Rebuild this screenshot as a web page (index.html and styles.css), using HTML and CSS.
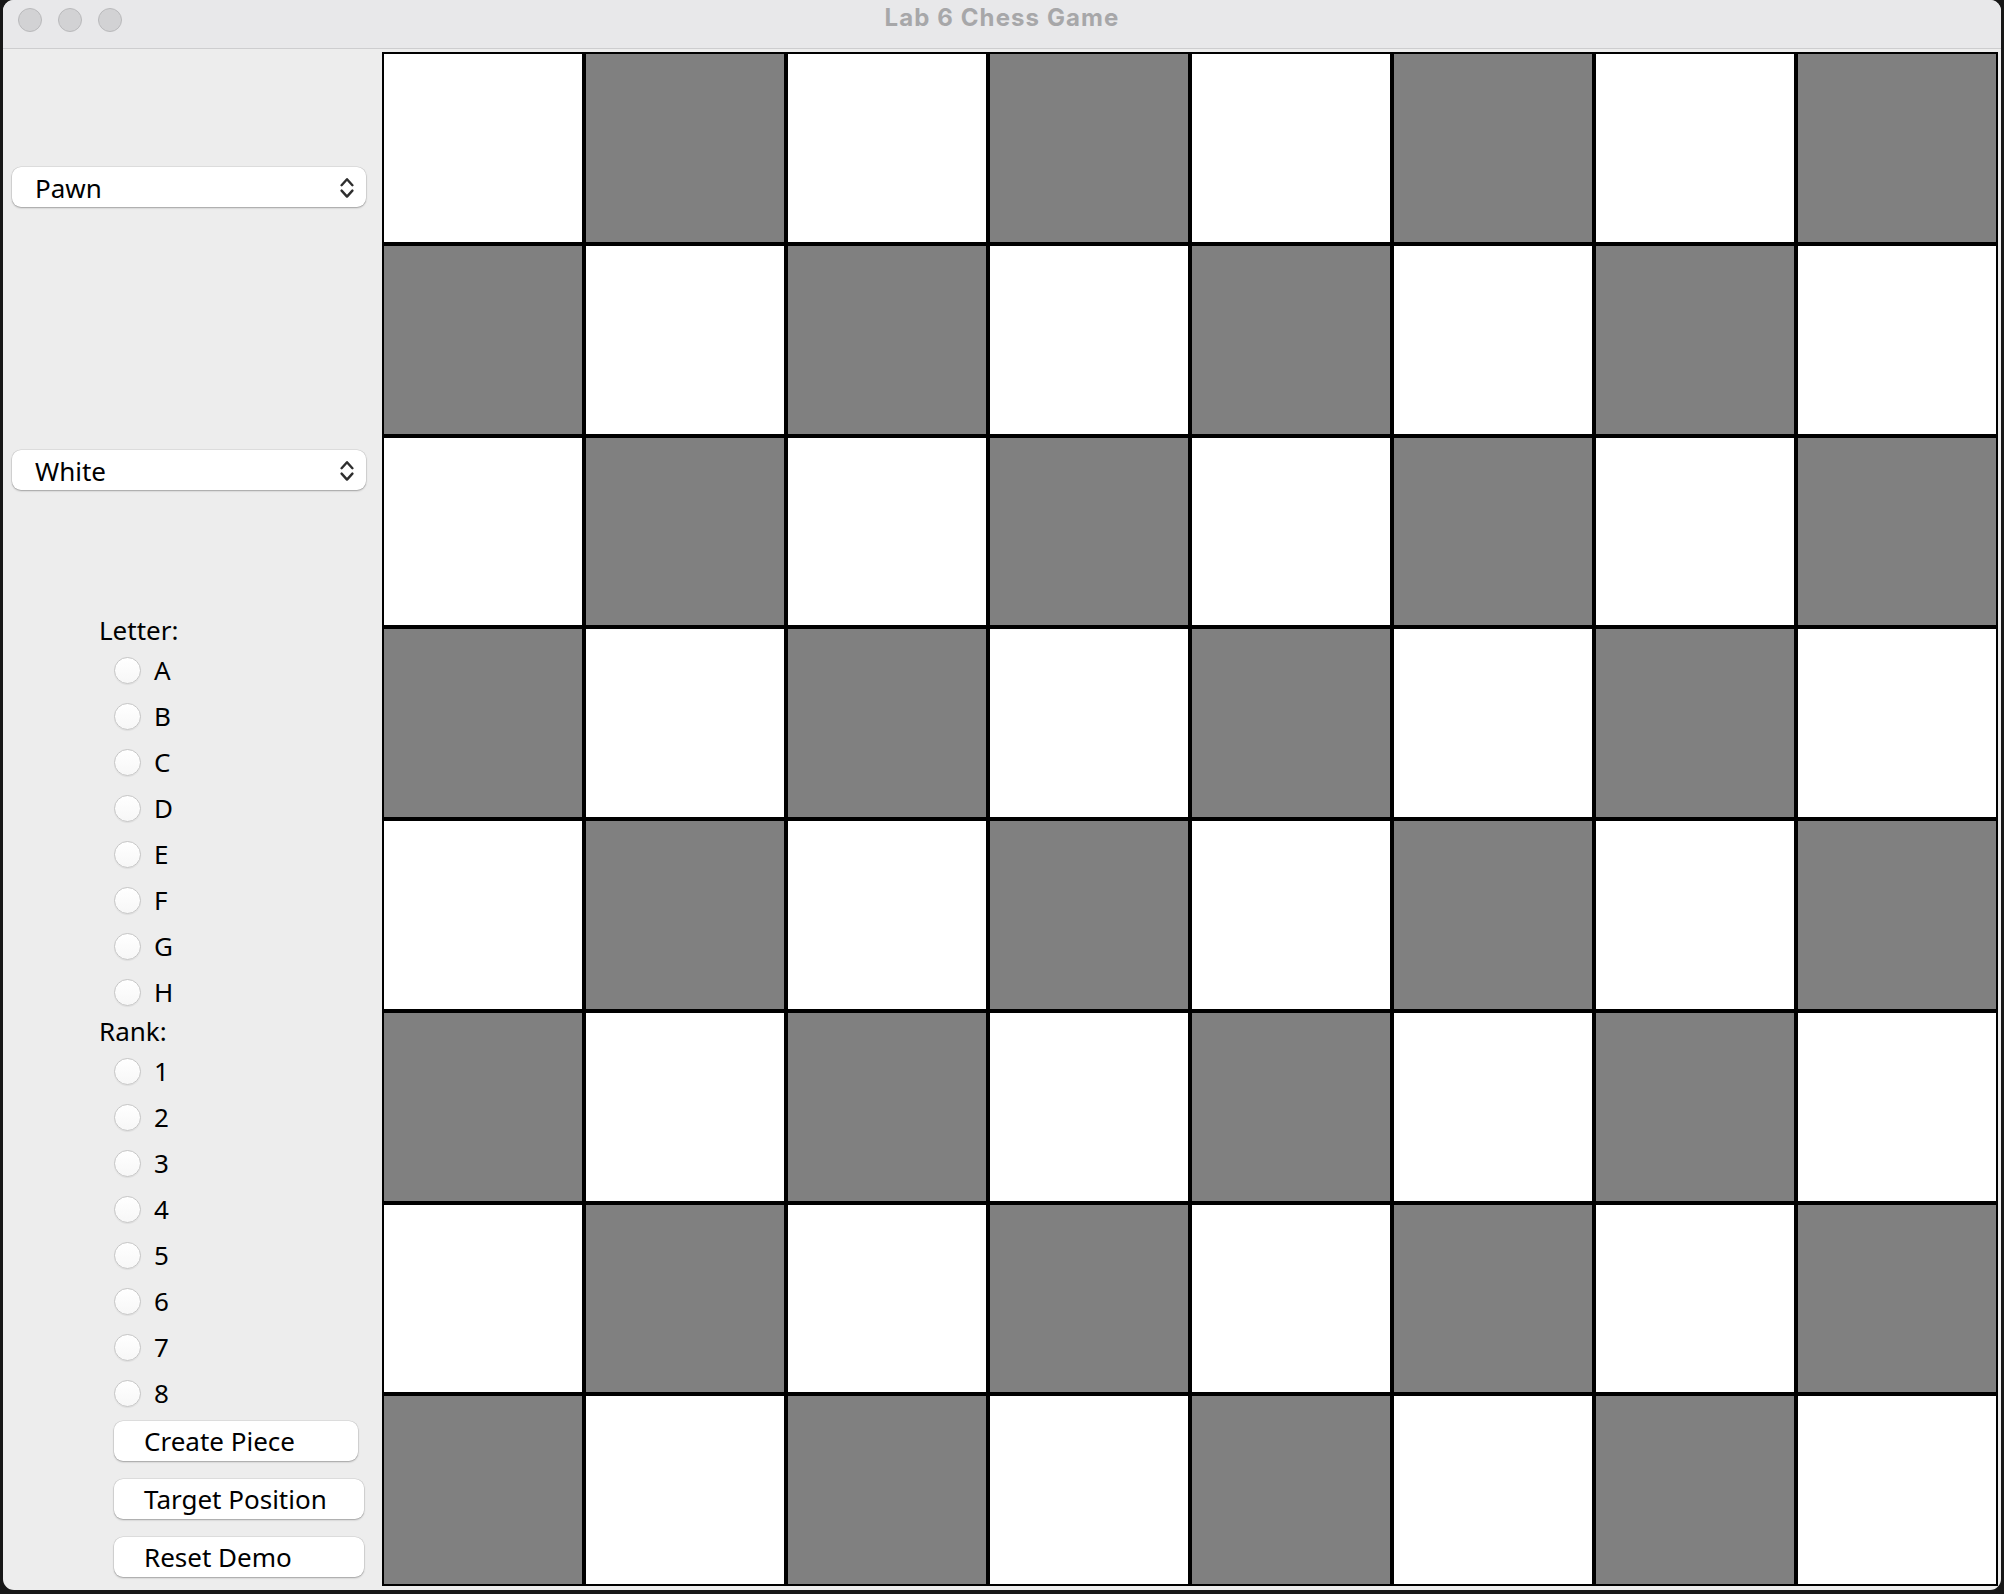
FILE: index.html
```html
<!DOCTYPE html>
<html lang="en">
<head>
<meta charset="utf-8">
<title>Lab 6 Chess Game</title>
<link rel="stylesheet" href="styles.css">
</head>
<body>
<div class="window">
  <header class="titlebar">
    <div class="lights"><span class="light"></span><span class="light"></span><span class="light"></span></div>
    <div class="title">Lab 6 Chess Game</div>
    <div class="spacer"></div>
  </header>
  <main class="content">
    <aside class="panel">
      <div class="combo combo-piece"><span class="combo-text">Pawn</span><svg class="chev" width="14" height="22" viewBox="0 0 14 22"><path d="M1.6 8.2 L7 2.2 L12.4 8.2 M1.6 13.6 L7 19.6 L12.4 13.6" fill="none" stroke="#2e2e2e" stroke-width="2.4" stroke-linecap="round" stroke-linejoin="round"/></svg></div>
      <div class="combo combo-color"><span class="combo-text">White</span><svg class="chev" width="14" height="22" viewBox="0 0 14 22"><path d="M1.6 8.2 L7 2.2 L12.4 8.2 M1.6 13.6 L7 19.6 L12.4 13.6" fill="none" stroke="#2e2e2e" stroke-width="2.4" stroke-linecap="round" stroke-linejoin="round"/></svg></div>
      <div class="group-label group-letter">Letter:</div>
      <ul class="radios">
        <li class="radio"><span class="dot"></span><span class="rlabel">A</span></li>
        <li class="radio"><span class="dot"></span><span class="rlabel">B</span></li>
        <li class="radio"><span class="dot"></span><span class="rlabel">C</span></li>
        <li class="radio"><span class="dot"></span><span class="rlabel">D</span></li>
        <li class="radio"><span class="dot"></span><span class="rlabel">E</span></li>
        <li class="radio"><span class="dot"></span><span class="rlabel">F</span></li>
        <li class="radio"><span class="dot"></span><span class="rlabel">G</span></li>
        <li class="radio"><span class="dot"></span><span class="rlabel">H</span></li>
      </ul>
      <div class="group-label">Rank:</div>
      <ul class="radios">
        <li class="radio"><span class="dot"></span><span class="rlabel">1</span></li>
        <li class="radio"><span class="dot"></span><span class="rlabel">2</span></li>
        <li class="radio"><span class="dot"></span><span class="rlabel">3</span></li>
        <li class="radio"><span class="dot"></span><span class="rlabel">4</span></li>
        <li class="radio"><span class="dot"></span><span class="rlabel">5</span></li>
        <li class="radio"><span class="dot"></span><span class="rlabel">6</span></li>
        <li class="radio"><span class="dot"></span><span class="rlabel">7</span></li>
        <li class="radio"><span class="dot"></span><span class="rlabel">8</span></li>
      </ul>
      <button class="btn btn-create">Create Piece</button>
      <button class="btn btn-wide">Target Position</button>
      <button class="btn btn-wide">Reset Demo</button>
    </aside>
    <section class="board">
      <div class="sq w"></div><div class="sq g"></div><div class="sq w"></div><div class="sq g"></div><div class="sq w"></div><div class="sq g"></div><div class="sq w"></div><div class="sq g"></div>
      <div class="sq g"></div><div class="sq w"></div><div class="sq g"></div><div class="sq w"></div><div class="sq g"></div><div class="sq w"></div><div class="sq g"></div><div class="sq w"></div>
      <div class="sq w"></div><div class="sq g"></div><div class="sq w"></div><div class="sq g"></div><div class="sq w"></div><div class="sq g"></div><div class="sq w"></div><div class="sq g"></div>
      <div class="sq g"></div><div class="sq w"></div><div class="sq g"></div><div class="sq w"></div><div class="sq g"></div><div class="sq w"></div><div class="sq g"></div><div class="sq w"></div>
      <div class="sq w"></div><div class="sq g"></div><div class="sq w"></div><div class="sq g"></div><div class="sq w"></div><div class="sq g"></div><div class="sq w"></div><div class="sq g"></div>
      <div class="sq g"></div><div class="sq w"></div><div class="sq g"></div><div class="sq w"></div><div class="sq g"></div><div class="sq w"></div><div class="sq g"></div><div class="sq w"></div>
      <div class="sq w"></div><div class="sq g"></div><div class="sq w"></div><div class="sq g"></div><div class="sq w"></div><div class="sq g"></div><div class="sq w"></div><div class="sq g"></div>
      <div class="sq g"></div><div class="sq w"></div><div class="sq g"></div><div class="sq w"></div><div class="sq g"></div><div class="sq w"></div><div class="sq g"></div><div class="sq w"></div>
    </section>
  </main>
</div>
</body>
</html>
```
FILE: styles.css
```css
* { box-sizing: border-box; }

html, body {
  margin: 0;
  padding: 0;
}

body {
  width: 2004px;
  height: 1594px;
  overflow: hidden;
  background: #171717;
  font-family: "Noto Sans", "Open Sans", "DejaVu Sans", sans-serif;
  color: #000;
}

.window {
  margin-left: 3px;
  width: 1998px;
  height: 1590px;
  border-radius: 11px;
  overflow: hidden;
  background: #ededed;
  display: flex;
  flex-direction: column;
}

.titlebar {
  height: 49px;
  flex: none;
  background: #e8e8ea;
  border-bottom: 1px solid #cdcdcf;
  display: grid;
  grid-template-columns: 1fr auto 1fr;
  align-items: start;
  padding-top: 4px;
}

.lights {
  display: flex;
  gap: 16px;
  margin-top: 4px;
  padding-left: 15px;
}

.light {
  width: 24px;
  height: 24px;
  border-radius: 50%;
  background: #d2d2d4;
  border: 1px solid #b9b9bb;
}

.title {
  font-family: Inter, "Liberation Sans", sans-serif;
  font-weight: 700;
  font-size: 24px;
  letter-spacing: 1.1px;
  line-height: 28px;
  color: #a7a7a9;
}

.content {
  flex: 1;
  display: flex;
  padding: 3px 3px 4px 0;
}

.panel {
  width: 379px;
  flex: none;
  display: flex;
  flex-direction: column;
  align-items: flex-start;
}

.combo {
  width: 354px;
  height: 40px;
  margin-left: 9px;
  background: #fff;
  border-radius: 9px;
  box-shadow: 0 0 0 0.5px rgba(0,0,0,0.12), 0 1px 2px rgba(0,0,0,0.28);
  display: flex;
  align-items: center;
  justify-content: space-between;
  padding: 1px 12px 0 23px;
}

.combo-piece { margin-top: 115px; }
.combo-color { margin-top: 243px; }

.combo-text {
  font-size: 26px;
  line-height: 40px;
  color: #000;
}

.chev { display: block; }

.group-label {
  margin-left: 96px;
  font-size: 26px;
  line-height: 32px;
  height: 32px;
}

.group-letter { margin-top: 124px; }

.radios {
  list-style: none;
  margin: 0;
  padding: 1px 0 0 111px;
}

.radio {
  height: 46px;
  display: flex;
  align-items: center;
  gap: 13px;
}

.dot {
  width: 27px;
  height: 27px;
  border-radius: 50%;
  background: linear-gradient(#ffffff, #f7f7f7);
  border: 1px solid #c6c6c6;
  box-shadow: 0 1px 1px rgba(0,0,0,0.06);
}

.rlabel {
  font-size: 26px;
  line-height: 46px;
}

.btn {
  margin-left: 111px;
  height: 40px;
  background: #fff;
  border: none;
  border-radius: 9px;
  box-shadow: 0 0 0 0.5px rgba(0,0,0,0.12), 0 1px 2px rgba(0,0,0,0.28);
  font-family: "Noto Sans", "Open Sans", "DejaVu Sans", sans-serif;
  font-size: 26px;
  line-height: 40px;
  color: #000;
  text-align: left;
  padding: 0 0 0 30px;
}

.btn-create {
  width: 244px;
  margin-top: 5px;
}

.btn-wide {
  width: 250px;
  margin-top: 18px;
}

.board {
  width: 1616px;
  height: 1534px;
  display: grid;
  grid-template-columns: repeat(8, 1fr);
  grid-template-rows: repeat(8, 1fr);
}

.sq {
  border: 2px solid #000;
}

.sq.w { background: #ffffff; }
.sq.g { background: #808080; }
```
